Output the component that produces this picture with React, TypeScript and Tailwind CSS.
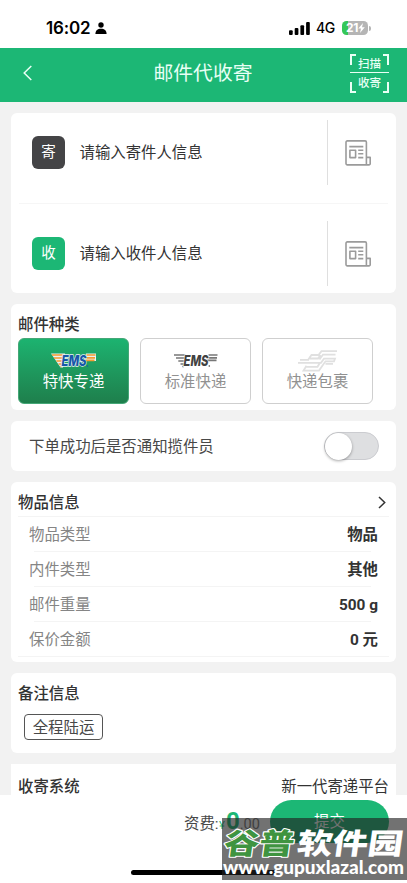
import { useState } from 'react';

const contacts = [
  { badge: '寄', text: '请输入寄件人信息', color: 'bg-[#444446]' },
  { badge: '收', text: '请输入收件人信息', color: 'bg-[#1cb775]' },
];

const mailTypes = [
  { name: '特快专递', logo: 'color' },
  { name: '标准快递', logo: 'gray' },
  { name: '快递包裹', logo: 'post' },
];

const itemInfo = [
  { label: '物品类型', value: '物品' },
  { label: '内件类型', value: '其他' },
  { label: '邮件重量', value: '500 g' },
  { label: '保价金额', value: '0 元' },
];

function AddressBookIcon() {
  return (
    <svg width="26" height="26" viewBox="0 0 26 26" fill="none" stroke="#9b9b9b" strokeWidth="1.6" strokeLinejoin="round">
      <path d="M21.1 24.9H2.3A1.3 1.3 0 0 1 1 23.6V2.2A1.3 1.3 0 0 1 2.3.9H20.1A1.3 1.3 0 0 1 21.4 2.2V24.9H24A1.2 1.2 0 0 0 25.2 23.7V17.4H21.4" />
      <path d="M4.3 6.6H18.3M4.9 10.2H10.6V17.6H4.9ZM13.2 10.2H18.3M13.2 13.8H18.3M13.2 17.6H18.3" />
    </svg>
  );
}

function EmsLogo({ gray }: { gray?: boolean }) {
  const stripe = gray ? '#777777' : '#f59b31';
  const text = gray ? '#414141' : '#1757a8';
  const edge = gray ? '#ffffff' : '#e9f3f3';
  return (
    <svg width="46" height="20" viewBox="0 -2 46 20">
      <path d="M0 .5H14L12 14.5H9.5Z" fill={edge} />
      <path d="M35 .5H45V8H33Z" fill={gray ? 'none' : edge} />
      <path d="M1 2H13M3 5H12M5.3 8H11.5M7.5 11H11M9.3 13.5H11M35.5 2H44.5M34.8 4.9H44M34.2 7.4H43.5" stroke={stripe} strokeWidth="1.7" />
      <text
        x="10.5"
        y="13.4"
        textLength="25"
        lengthAdjust="spacingAndGlyphs"
        fill={text}
        stroke={edge}
        strokeWidth="1.4"
        paintOrder="stroke"
        fontSize="15"
        fontWeight="800"
        fontStyle="italic"
        fontFamily="Inter, sans-serif"
      >
        EMS
      </text>
      <circle cx="36.3" cy="13" r=".8" fill={text} />
    </svg>
  );
}

function PostLogo() {
  return (
    <svg width="40" height="22" viewBox="0 0 40 22" fill="none" stroke="#e0e0e0" strokeWidth="1.8">
      <path d="M39 1.2H23.5L20.5 5H13.5L11 8.5H20L22.5 5M37.5 4.6H25L21.5 9.5M0 12.8H23L26 8.7H37L36 11.3H27.5L21 20.6H5.5L8.5 15.8M2 9.8H11M8.5 16.8H19.5L22 12.8M35 13.8H27.5" />
    </svg>
  );
}

function StatusBar() {
  return (
    <div className="flex h-12 shrink-0 items-center bg-white pt-2 pl-[46px] text-black">
      <span className="w-[45px] font-[Inter] text-[17px] leading-5 font-semibold tracking-[-0.2px] whitespace-nowrap">16:02</span>
      <svg className="ml-[4px]" width="12" height="12" viewBox="0 0 12 12">
        <circle cx="6" cy="3" r="2.7" />
        <path d="M.4 12C.4 8.6 2.6 6.8 6 6.8S11.6 8.6 11.6 12Z" />
      </svg>
      <svg className="ml-[182px]" width="22" height="13" viewBox="0 0 22 13">
        <rect x="0" y="8.3" width="3.7" height="4.7" rx="1" />
        <rect x="5.7" y="6" width="3.7" height="7" rx="1" />
        <rect x="11.4" y="3.3" width="3.7" height="9.7" rx="1" />
        <rect x="17.1" y="0" width="3.7" height="13" rx="1" />
      </svg>
      <span className="ml-[5px] w-[20px] font-[Inter] text-[14px] leading-5 font-medium tracking-[-0.4px]">4G</span>
      <div className="ml-[6px] flex h-[14px] w-[26px] items-center rounded-[4.5px] bg-linear-to-r from-[#34c759] from-22% to-[#b5b5b5] to-22% pl-[4px] text-white">
        <span className="font-[Inter] text-[12px] leading-[14px] font-bold tracking-[-0.3px]">21</span>
        <svg width="7" height="10" viewBox="0 0 7 10" fill="currentColor">
          <path d="M5 0L.3 5.6H3L2 10L6.8 4.2H4Z" />
        </svg>
      </div>
      <span className="ml-px h-[5px] w-[1.5px] rounded-r bg-[#b5b5b5]" />
    </div>
  );
}

function Header() {
  return (
    <header className="flex h-[54px] shrink-0 items-center justify-between bg-[#1cb775] pr-[18px] pl-[23px] text-[#e9fff5]">
      <button className="w-[33px] pb-[5px]">
        <svg width="9" height="16" viewBox="0 0 9 16" fill="none" stroke="currentColor" strokeWidth="1.5">
          <path d="M8.3 1L1.2 8L8.3 15" />
        </svg>
      </button>
      <h1 className="pb-[2px] text-[19.8px] leading-6">邮件代收寄</h1>
      <button className="mb-[4px] flex h-[39px] w-[39px] flex-col items-center text-[11.5px] leading-[17px] font-medium">
        <span className="flex h-[18px] w-full justify-between">
          <span className="h-[11px] w-[6px] border-t-2 border-l-2" />
          <span className="w-[23px] pt-[2px] whitespace-nowrap">扫描</span>
          <span className="h-[11px] w-[6px] border-t-2 border-r-2" />
        </span>
        <span className="h-[1.5px] w-full bg-current" />
        <span className="flex h-[20px] w-full items-end justify-between">
          <span className="h-[11px] w-[6px] border-b-2 border-l-2" />
          <span className="w-[23px] pb-px whitespace-nowrap">收寄</span>
          <span className="h-[11px] w-[6px] border-r-2 border-b-2" />
        </span>
      </button>
    </header>
  );
}

function Watermark() {
  return (
    <div className="absolute top-[818px] left-[222px] h-[62px] w-[185px] overflow-hidden bg-[#202020]/63">
      <svg width="185" height="62" viewBox="0 0 185 62" fontWeight="900">
        <g fontFamily="Noto Sans CJK SC, sans-serif" fontSize="29" strokeLinejoin="round" paintOrder="stroke">
          <text x="6" y="36" textLength="70" lengthAdjust="spacingAndGlyphs" transform="skewX(-8)" fill="#3f9440" stroke="#ffffff" strokeWidth="2.2">谷普</text>
          <text x="79" y="36" textLength="106" lengthAdjust="spacingAndGlyphs" transform="skewX(-8)" fill="#ffffff">软件园</text>
        </g>
        <text x="1" y="56" textLength="181" lengthAdjust="spacingAndGlyphs" fill="#ffffff" fontSize="18.5" fontWeight="900" fontFamily="Lato, sans-serif">
          www.gupuxlazal.com
        </text>
      </svg>
    </div>
  );
}

export default function App() {
  const [selected, setSelected] = useState(0);
  const [notify, setNotify] = useState(false);

  return (
    <div className="relative flex h-[883px] w-[407px] flex-col overflow-hidden bg-[#f2f2f2] font-['Roboto','Noto_Sans_CJK_SC',sans-serif] text-[15.4px] leading-5 text-[#333]">
      <StatusBar />
      <Header />

      <main className="flex min-h-0 flex-1 flex-col gap-[11px] overflow-hidden px-[11px] pt-[11px]">
        <section className="h-[180px] shrink-0 rounded-md bg-white px-2">
          {contacts.map((contact, index) => (
            <div
              key={contact.badge}
              className={`flex pr-[17px] pl-[13px] ${index === 0 ? 'h-[91px] border-b border-[#f6f6f6] pt-[7px]' : 'h-[89px] pt-[17px]'}`}
            >
              <div className="flex h-[65px] flex-1 items-center border-r border-[#dfdfdf]">
                <span className={`flex h-[33px] w-[33px] items-center justify-center rounded-[6px] text-[14.5px] text-white ${contact.color}`}>
                  {contact.badge}
                </span>
                <span className="ml-[14.5px]">{contact.text}</span>
              </div>
              <button className="ml-[17px] flex h-[65px] items-center">
                <AddressBookIcon />
              </button>
            </div>
          ))}
        </section>

        <section className="h-[106px] shrink-0 rounded-md bg-white px-[7px] pt-[11px]">
          <h2 className="font-medium">邮件种类</h2>
          <div className="mt-[3px] flex gap-[11px]">
            {mailTypes.map((type, index) => (
              <button
                key={type.name}
                onClick={() => setSelected(index)}
                className={`flex h-[66px] w-[111px] flex-col items-center rounded-[6px] border pt-[10px] ${
                  selected === index
                    ? 'border-[#45a777] bg-linear-to-b from-[#1cb370] to-[#1e7f4c] text-white'
                    : 'border-[#cfcfcf] bg-white text-[#919191]'
                }`}
              >
                <span className="flex h-[23px] items-center">
                  {type.logo === 'post' ? <PostLogo /> : <EmsLogo gray={type.logo === 'gray'} />}
                </span>
                <span>{type.name}</span>
              </button>
            ))}
          </div>
        </section>

        <section className="flex h-[50px] shrink-0 items-center justify-between rounded-md bg-white pr-[17px] pl-[18px]">
          <span className="pt-px text-[#484848]">下单成功后是否通知揽件员</span>
          <button
            onClick={() => setNotify(!notify)}
            className={`flex h-[28px] w-[55px] items-center rounded-full border border-[#cbccd0] ${notify ? 'justify-end bg-[#1cb775]' : 'bg-[#dedfe1]'}`}
          >
            <span className="h-[27px] w-[27px] rounded-full bg-white shadow-[0_1px_3px_rgba(0,0,0,0.35)]" />
          </button>
        </section>

        <section className="h-[180px] shrink-0 rounded-md bg-white px-[7px]">
          <div className="flex h-[35px] items-center justify-between border-b border-[#f4f4f4] pt-[7px] pr-[3px]">
            <h2 className="font-medium">物品信息</h2>
            <svg width="8" height="13" viewBox="0 0 8 13" fill="none" stroke="#333" strokeWidth="1.5">
              <path d="M1 1L6.7 6.5L1 12" />
            </svg>
          </div>
          {itemInfo.map((item, index) => (
            <div key={item.label}>
              <div className="flex h-[34px] items-center justify-between pt-px pr-[11px] pl-[11px]">
                <span className="text-[#858585]">{item.label}</span>
                <span className="font-bold">{item.value}</span>
              </div>
              <div className={`h-px bg-[#f4f4f4] ${index < 3 ? 'mr-[18px] ml-[16px]' : ''}`} />
            </div>
          ))}
        </section>

        <section className="h-[80px] shrink-0 rounded-md bg-white px-[7px] pt-[11px]">
          <h2 className="font-medium">备注信息</h2>
          <button className="mt-[10px] ml-[6px] flex h-[26px] w-[79px] items-center justify-center rounded-[4px] border border-[#555] pt-px text-[#484848]">
            全程陆运
          </button>
        </section>

        <section className="flex h-[31px] shrink-0 justify-between bg-white px-[7px] pt-[16px] leading-[15px]">
          <h2 className="font-medium">收寄系统</h2>
          <span>新一代寄递平台</span>
        </section>
      </main>

      <footer className="relative flex h-[88px] shrink-0 items-start bg-white pl-[184px]">
        <div className="flex w-[86px] items-baseline pt-[16px] text-[#484848]">
          <span className="w-[35px] whitespace-nowrap">资费:</span>
          <span className="w-[7px] text-[11px] text-[#1cb775]">¥</span>
          <span className="text-[24px] font-bold text-[#1cb775]">0</span>
          <span className="text-[14.5px] text-[#777]">.00</span>
        </div>
        <button className="mt-[5px] h-[43px] w-[119px] rounded-full bg-[#1cb775] text-white">提交</button>
        <div className="absolute bottom-[8px] left-[131px] h-[5px] w-[145px] rounded-full bg-black" />
      </footer>
      <Watermark />
    </div>
  );
}
